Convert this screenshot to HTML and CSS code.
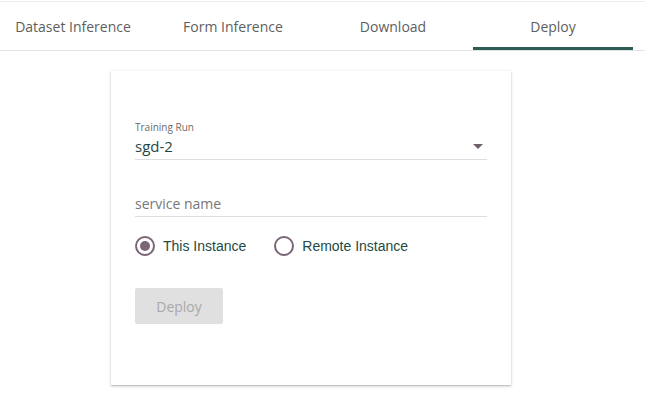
FILE: index.html
```html
<!DOCTYPE html>
<html>
<head>
<meta charset="utf-8">
<link rel="stylesheet" href="styles.css">
</head>
<body>
<div class="tabs">
  <div class="tab">Dataset Inference</div>
  <div class="tab">Form Inference</div>
  <div class="tab">Download</div>
  <div class="tab active">Deploy</div>
</div>
<div class="content">
  <div class="card">
    <div class="field select">
      <label class="flabel">Training Run</label>
      <div class="value-row">
        <span class="value">sgd-2</span>
        <svg class="arrow" width="10" height="5" viewBox="0 0 10 5"><path d="M0 0 L10 0 L5 5 Z" fill="#6f5f6d"/></svg>
      </div>
    </div>
    <div class="field text">
      <span class="placeholder">service name</span>
    </div>
    <div class="radios">
      <div class="radio checked"><span class="circle"><span class="dot"></span></span><span class="rlabel">This Instance</span></div>
      <div class="radio"><span class="circle"></span><span class="rlabel">Remote Instance</span></div>
    </div>
    <button class="btn" disabled>Deploy</button>
  </div>
</div>
</body>
</html>
```
FILE: styles.css
```css
html, body { margin: 0; padding: 0; background: #fff; }
body { font-family: "Open Sans", sans-serif; width: 645px; height: 411px; overflow: hidden; }
.tabs {
  display: flex;
  margin-top: 1px;
  border-top: 1px solid #ececec;
  border-bottom: 1px solid #e3e3e3;
  height: 48px;
  margin-left: -7px;
  width: 652px;
}
.tab {
  width: 160px;
  display: flex;
  align-items: center;
  justify-content: center;
  font-size: 14px;
  color: #5e5e5e;
  box-sizing: border-box;
  border-bottom: 3px solid transparent;
  padding-top: 4px;
}
.tab.active { border-bottom-color: #2b5b53; }
.content { padding-top: 20px; padding-left: 111px; }
.card {
  width: 400px;
  height: 314px;
  box-sizing: border-box;
  padding: 50px 24px 0 24px;
  box-shadow: 0 1px 3px rgba(0,0,0,0.22), 0 1px 1px rgba(0,0,0,0.1);
  background: #fff;
}
.field { border-bottom: 1px solid #dedede; }
.flabel { display: block; font-size: 10px; color: #6b6b6b; line-height: 12px; }
.value-row { display: flex; align-items: center; justify-content: space-between; height: 26px; }
.value { font-size: 15px; color: #1f463f; }
.arrow { margin-right: 4px; }
.text { margin-top: 31px; height: 25px; }
.placeholder { font-size: 14px; color: #777; line-height: 26px; }
.radios { display: flex; margin-top: 19px; gap: 28px; }
.radio { display: flex; align-items: center; font-family: "Liberation Sans", Arial, sans-serif; font-size: 14px; color: #234a43; }
.circle {
  width: 20px; height: 20px; box-sizing: border-box;
  border: 2px solid #7b6577; border-radius: 50%;
  display: flex; align-items: center; justify-content: center;
  margin-right: 8px;
}
.dot { width: 10px; height: 10px; border-radius: 50%; background: #7b6577; }
.btn {
  margin-top: 32px;
  width: 88px; height: 36px;
  border: none; border-radius: 2px;
  background: #e0e0e0;
  color: #a8a8a8;
  font-family: "Open Sans", sans-serif;
  font-size: 14px;
  padding: 0;
}
```
